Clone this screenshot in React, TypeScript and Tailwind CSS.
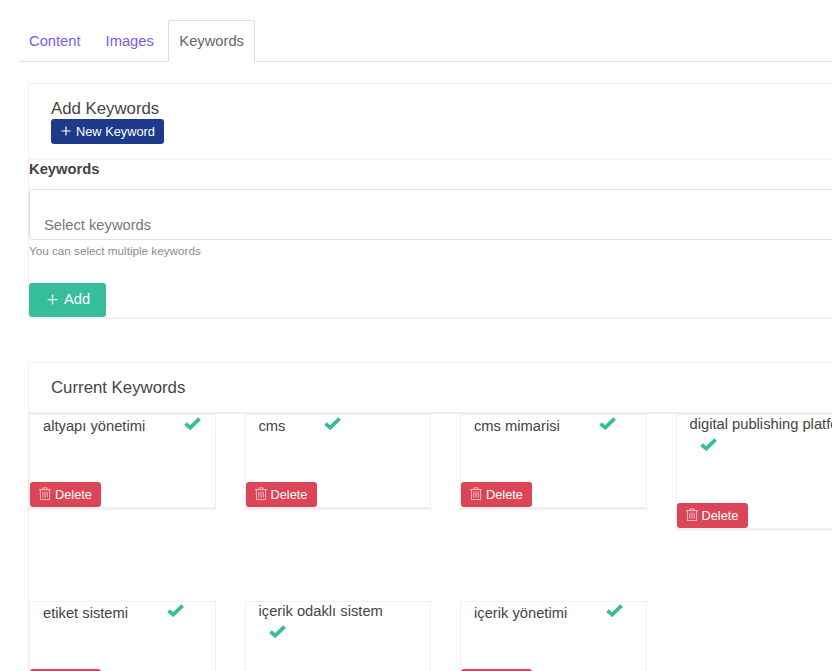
import { Plus } from 'lucide-react';

const FONT = "font-['Liberation_Sans',Arial,sans-serif]";

const KEYWORDS = [
  'altyapı yönetimi',
  'cms',
  'cms mimarisi',
  'digital publishing platform',
  'etiket sistemi',
  'içerik odaklı sistem',
  'içerik yönetimi',
];

function TrashIcon() {
  return (
    <svg width="12" height="13" viewBox="0 0 12 13" fill="none" stroke="currentColor" strokeWidth="0.8" className="mb-[3px] shrink-0 opacity-80">
      <path d="M0 2.6h12M4 2.6V0.8h4v1.8M1.4 2.6v9.9h9.2V2.6M3.8 4.6v6M6 4.6v6M8.2 4.6v6" />
    </svg>
  );
}

function CheckIcon() {
  return (
    <svg width="17" height="13" viewBox="0 0 17 13" fill="none" stroke="currentColor" strokeWidth="3.8" strokeLinejoin="miter">
      <path d="M1.5 6.6L6.2 10.6L15.6 1.6" />
    </svg>
  );
}

function KeywordCard({ name }: { name: string }) {
  return (
    <div className="border border-[#f0f0f0] border-b-[3px] bg-white">
      <div className="-mt-[1.5px] flex flex-wrap items-center pl-[13px] text-[14.72px] leading-[21px] text-[#444444]">
        <span className="mr-[29px] whitespace-nowrap">{name}</span>
        <span className="ml-[10px] block h-[25px] pt-[3px] text-[#36bd9b]">
          <CheckIcon />
        </span>
      </div>
      <button className="mt-[43.5px] flex h-[25px] w-[71px] items-center gap-[4px] rounded-[3px] bg-[#dc4558] pl-[9px] text-[12.8px] text-white">
        <TrashIcon />
        Delete
      </button>
    </div>
  );
}

export default function App() {
  return (
    <div className={`${FONT} h-[671px] w-[832px] overflow-hidden bg-white text-[14.72px] text-[#444444]`}>
      <div className="pl-[19px] pt-[20px]">
        <div className="flex h-[42px] w-[900px] border-b border-[#dddddd]">
          <a className="px-[10px] pt-[11px] leading-[21px] text-[#7c5ce6]">Content</a>
          <a className="ml-[4px] px-[11px] pt-[11px] leading-[21px] text-[#7c5ce6]">Images</a>
          <a className="ml-[3px] h-[42px] rounded-t-[3px] border border-b-0 border-[#dddddd] bg-white px-[10.5px] pt-[10px] leading-[21px] text-[#666666]">
            Keywords
          </a>
        </div>
      </div>

      <div className="ml-[28px] mt-[21px] w-[900px] border-t border-l border-b-2 border-[#f0f0f0]">
        <div className="h-[76px] border-b border-[#f0f0f0] pl-[22px] pt-[14px]">
          <div className="text-[16.8px] leading-[21px]">Add Keywords</div>
          <button className="flex h-[25px] w-[113px] items-center rounded-[3px] bg-[#1e3a8a] pl-[8px] text-[12.8px] text-white">
            <Plus size={14} strokeWidth={2} className="mb-[1px] mr-[3px]" />
            New Keyword
          </button>
        </div>
        <div>
          <label className="block font-bold leading-[18px]">Keywords</label>
          <div className="mt-[11px] h-[51px] rounded-[4px] border border-[#dddddd] pl-[14px] pt-[26px] leading-[18px] text-[#777777]">
            Select keywords
          </div>
          <p className="mt-[3px] text-[11.7px] leading-[15px] text-[#868e96]">You can select multiple keywords</p>
          <button className="mt-[25px] flex h-[34px] w-[77px] items-center rounded-[3px] bg-[#36bd9b] pl-[16px] pb-[2px] text-white">
            <Plus size={15} strokeWidth={2} className="mr-[4px]" />
            Add
          </button>
        </div>
      </div>

      <div className="ml-[28px] mt-[43px] h-[400px] w-[900px] border-t border-l border-[#f0f0f0]">
        <div className="h-[51px] border-b-2 border-[#eeeeee] pl-[22px] pt-[14px] text-[16.8px] leading-[21px]">
          Current Keywords
        </div>
        <div className="grid grid-cols-[repeat(4,186.5px)] items-start gap-x-[29px] gap-y-[70px]">
          {KEYWORDS.map((keyword) => (
            <KeywordCard key={keyword} name={keyword} />
          ))}
        </div>
      </div>
    </div>
  );
}
